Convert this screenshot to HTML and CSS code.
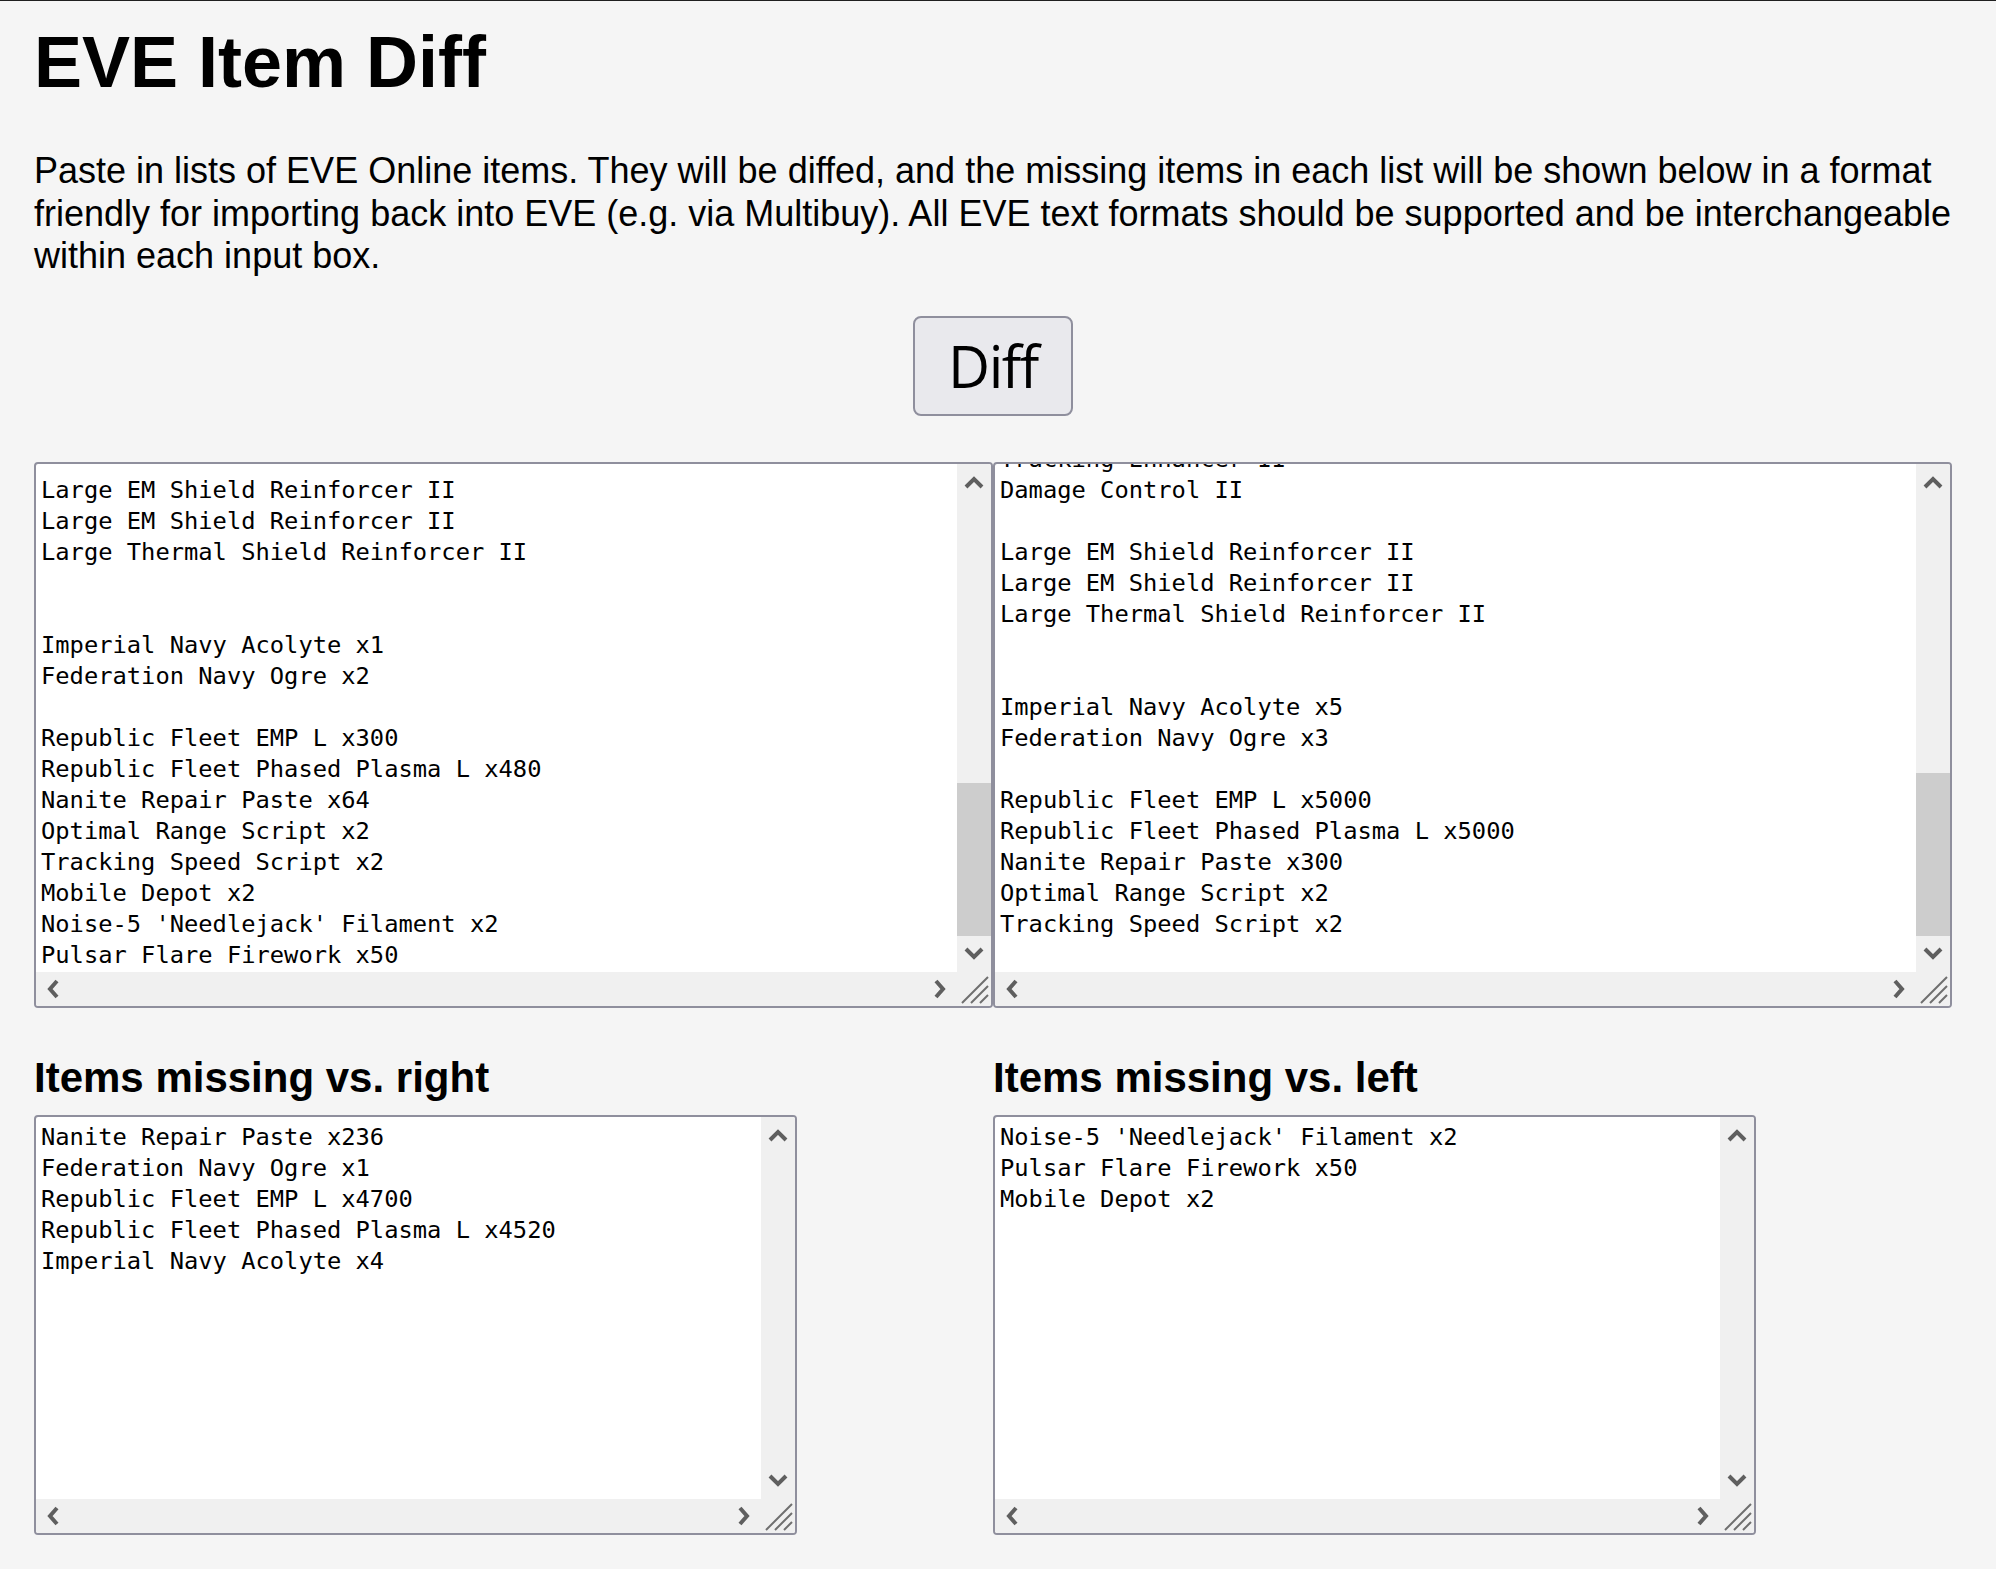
FILE: index.html
```html
<!DOCTYPE html>
<html lang="en">
<head>
<meta charset="utf-8">
<title>EVE Item Diff</title>
<link rel="stylesheet" href="styles.css">
</head>
<body>
<div class="page">
  <h1 class="title">EVE Item Diff</h1>
  <p class="intro">Paste in lists of EVE Online items. They will be diffed, and the missing items in each list will be shown below in a format friendly for importing back into EVE (e.g. via Multibuy). All EVE text formats should be supported and be interchangeable within each input box.</p>
  <div class="actions"><button class="diff-btn" type="button">Diff</button></div>

  <div class="inputs">
    <div class="box box-input">
      <div class="box-text"><div class="lines">
Large EM Shield Reinforcer II
Large EM Shield Reinforcer II
Large Thermal Shield Reinforcer II


Imperial Navy Acolyte x1
Federation Navy Ogre x2

Republic Fleet EMP L x300
Republic Fleet Phased Plasma L x480
Nanite Repair Paste x64
Optimal Range Script x2
Tracking Speed Script x2
Mobile Depot x2
Noise-5 'Needlejack' Filament x2
Pulsar Flare Firework x50</div></div>
      <div class="vscroll">
        <div class="sb-btn"><svg class="chev" width="20" height="14" viewBox="0 0 20 14"><path d="M2 12L10 4L18 12"/></svg></div>
        <div class="sb-track"><div class="sb-thumb" style="height:153px"></div></div>
        <div class="sb-btn"><svg class="chev" width="20" height="14" viewBox="0 0 20 14"><path d="M2 2L10 10L18 2"/></svg></div>
      </div>
      <div class="hscroll">
        <div class="sb-btn"><svg class="chev" width="14" height="20" viewBox="0 0 14 20"><path d="M11 2L4 10L11 18"/></svg></div>
        <div class="sb-btn"><svg class="chev" width="14" height="20" viewBox="0 0 14 20"><path d="M3 2L10 10L3 18"/></svg></div>
      </div>
      <div class="corner"><svg class="grip" width="30" height="30" viewBox="0 0 30 30"><path d="M3 29L29 3M12 29L29 12M21 29L29 21"/></svg></div>
    </div>

    <div class="box box-input">
      <div class="box-text"><div class="lines">Tracking Enhancer II
Damage Control II

Large EM Shield Reinforcer II
Large EM Shield Reinforcer II
Large Thermal Shield Reinforcer II


Imperial Navy Acolyte x5
Federation Navy Ogre x3

Republic Fleet EMP L x5000
Republic Fleet Phased Plasma L x5000
Nanite Repair Paste x300
Optimal Range Script x2
Tracking Speed Script x2
</div></div>
      <div class="vscroll">
        <div class="sb-btn"><svg class="chev" width="20" height="14" viewBox="0 0 20 14"><path d="M2 12L10 4L18 12"/></svg></div>
        <div class="sb-track"><div class="sb-thumb" style="height:163px"></div></div>
        <div class="sb-btn"><svg class="chev" width="20" height="14" viewBox="0 0 20 14"><path d="M2 2L10 10L18 2"/></svg></div>
      </div>
      <div class="hscroll">
        <div class="sb-btn"><svg class="chev" width="14" height="20" viewBox="0 0 14 20"><path d="M11 2L4 10L11 18"/></svg></div>
        <div class="sb-btn"><svg class="chev" width="14" height="20" viewBox="0 0 14 20"><path d="M3 2L10 10L3 18"/></svg></div>
      </div>
      <div class="corner"><svg class="grip" width="30" height="30" viewBox="0 0 30 30"><path d="M3 29L29 3M12 29L29 12M21 29L29 21"/></svg></div>
    </div>
  </div>

  <div class="results">
    <section class="result">
      <h3 class="result-title">Items missing vs. right</h3>
      <div class="box box-output">
        <div class="box-text"><div class="lines">Nanite Repair Paste x236
Federation Navy Ogre x1
Republic Fleet EMP L x4700
Republic Fleet Phased Plasma L x4520
Imperial Navy Acolyte x4</div></div>
        <div class="vscroll">
          <div class="sb-btn"><svg class="chev" width="20" height="14" viewBox="0 0 20 14"><path d="M2 12L10 4L18 12"/></svg></div>
          <div class="sb-track"></div>
          <div class="sb-btn"><svg class="chev" width="20" height="14" viewBox="0 0 20 14"><path d="M2 2L10 10L18 2"/></svg></div>
        </div>
        <div class="hscroll">
          <div class="sb-btn"><svg class="chev" width="14" height="20" viewBox="0 0 14 20"><path d="M11 2L4 10L11 18"/></svg></div>
          <div class="sb-btn"><svg class="chev" width="14" height="20" viewBox="0 0 14 20"><path d="M3 2L10 10L3 18"/></svg></div>
        </div>
        <div class="corner"><svg class="grip" width="30" height="30" viewBox="0 0 30 30"><path d="M3 29L29 3M12 29L29 12M21 29L29 21"/></svg></div>
      </div>
    </section>
    <section class="result">
      <h3 class="result-title">Items missing vs. left</h3>
      <div class="box box-output">
        <div class="box-text"><div class="lines">Noise-5 'Needlejack' Filament x2
Pulsar Flare Firework x50
Mobile Depot x2</div></div>
        <div class="vscroll">
          <div class="sb-btn"><svg class="chev" width="20" height="14" viewBox="0 0 20 14"><path d="M2 12L10 4L18 12"/></svg></div>
          <div class="sb-track"></div>
          <div class="sb-btn"><svg class="chev" width="20" height="14" viewBox="0 0 20 14"><path d="M2 2L10 10L18 2"/></svg></div>
        </div>
        <div class="hscroll">
          <div class="sb-btn"><svg class="chev" width="14" height="20" viewBox="0 0 14 20"><path d="M11 2L4 10L11 18"/></svg></div>
          <div class="sb-btn"><svg class="chev" width="14" height="20" viewBox="0 0 14 20"><path d="M3 2L10 10L3 18"/></svg></div>
        </div>
        <div class="corner"><svg class="grip" width="30" height="30" viewBox="0 0 30 30"><path d="M3 29L29 3M12 29L29 12M21 29L29 21"/></svg></div>
      </div>
    </section>
  </div>
</div>
</body>
</html>
```

FILE: styles.css
```css
* {
  box-sizing: border-box;
}

html {
  background: #f5f5f5;
}

body {
  margin: 0;
  border-top: 1px solid #1f1f1f;
  background: #f5f5f5;
  color: #000;
  font-family: "Liberation Sans", Arial, sans-serif;
}

.page {
  width: 1918px;
  margin-left: 34px;
  padding-top: 20px;
}

.title {
  margin: 0;
  font-size: 72px;
  line-height: 82px;
  font-weight: 700;
}

.intro {
  margin: 47px -16px 0 0;
  font-size: 36px;
  line-height: 42.5px;
}

.actions {
  display: flex;
  justify-content: center;
  margin-top: 38.5px;
}

.diff-btn {
  width: 160px;
  height: 100px;
  padding: 0;
  border: 2px solid #8f8f9d;
  border-radius: 8px;
  background: #e9e9ed;
  color: #000;
  font-family: "Open Sans", "Noto Sans", sans-serif;
  font-size: 58px;
  letter-spacing: -1.5px;
  line-height: 1.36;
}

.inputs {
  display: flex;
  margin-top: 46px;
}

.box {
  display: grid;
  grid-template-columns: minmax(0, 1fr) 34px;
  grid-template-rows: minmax(0, 1fr) 34px;
  border: 2px solid #8f8f9d;
  border-radius: 4px;
  background: #fff;
  overflow: hidden;
}

.box-input {
  width: 959px;
  height: 546px;
}

.box-text {
  overflow: hidden;
  padding: 0 5px;
  font-family: "DejaVu Sans Mono", "Liberation Mono", monospace;
  font-size: 23.75px;
  line-height: 31px;
  white-space: pre;
}

.box-input .lines {
  margin-top: -20px;
}

.box-output .box-text {
  padding-top: 5px;
}

.vscroll {
  display: flex;
  flex-direction: column;
  background: #f0f0f0;
}

.sb-btn {
  flex: none;
  display: flex;
  align-items: center;
  justify-content: center;
  height: 36px;
}

.hscroll .sb-btn {
  width: 34px;
  height: 34px;
}

.sb-track {
  flex: 1;
  display: flex;
  flex-direction: column;
  justify-content: flex-end;
}

.sb-thumb {
  background: #cdcdcd;
}

.hscroll {
  display: flex;
  justify-content: space-between;
  align-items: center;
  background: #f0f0f0;
}

.corner {
  display: flex;
  align-items: flex-end;
  justify-content: flex-end;
  padding: 0 2px 2px 0;
  background: #f0f0f0;
}

.chev path {
  fill: none;
  stroke: #5f5f5f;
  stroke-width: 4;
}

.grip path {
  fill: none;
  stroke: #6f6f6f;
  stroke-width: 2;
}

.results {
  display: flex;
  margin-top: 45.5px;
}

.result {
  width: 959px;
}

.result-title {
  margin: 0 0 13.5px;
  font-size: 42px;
  line-height: 48px;
  font-weight: 700;
}

.box-output {
  width: 763px;
  height: 420px;
}
```
